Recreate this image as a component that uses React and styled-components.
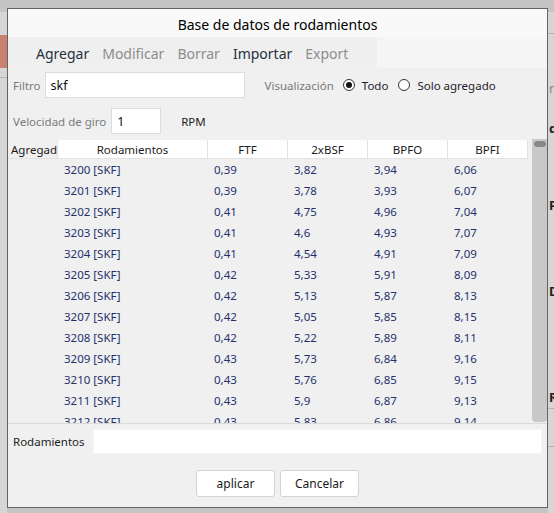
import React from "react";
import styled, { createGlobalStyle } from "styled-components";

const Global = createGlobalStyle`
  html, body { margin: 0; padding: 0; }
  body {
    width: 554px; height: 513px; overflow: hidden;
    background: #c5c5c5;
    font-family: "Noto Sans", "Open Sans", sans-serif;
  }
  * { box-sizing: border-box; }
`;

const Desktop = styled.div`
  position: relative;
  width: 554px;
  height: 513px;
  overflow: hidden;
`;

const BackStrip = styled.div`
  position: absolute;
  top: 12px;
  bottom: 0;
  left: ${(p) => p.$left}px;
  width: ${(p) => p.$width}px;
  background: #d6d6d6;
  overflow: hidden;
`;

const BackBlock = styled.div`
  position: absolute;
  left: 0;
  top: ${(p) => p.$top}px;
  width: 100%;
  height: ${(p) => p.$h}px;
  background: ${(p) => p.$color};
`;

const BackGlyph = styled.span`
  position: absolute;
  left: 1px;
  top: ${(p) => p.$top}px;
  font-size: 13px;
  line-height: 16px;
  font-weight: ${(p) => (p.$bold ? 700 : 400)};
  color: ${(p) => (p.$bold ? "#222" : "#888")};
  white-space: nowrap;
`;

const Window = styled.div`
  position: absolute;
  left: 7px;
  top: 8px;
  width: 541px;
  height: 500px;
  border: 1px solid #646464;
  background: #f0f0f0;
  display: flex;
  flex-direction: column;
`;

const TitleBar = styled.div`
  height: 28px;
  background: #f9f9f9;
  display: flex;
  align-items: center;
  justify-content: center;
  font-size: 14px;
  color: #000;
  padding-top: 2px;
`;

const MenuRow = styled.div`
  height: 31px;
  background: #f5f5f5;
  display: flex;
`;

const MenuGroup = styled.div`
  width: 369px;
  background: #efefef;
  display: flex;
  align-items: center;
  gap: 13px;
  padding-left: 28px;
  padding-top: 1px;
`;

const MenuItem = styled.span`
  font-size: 14px;
  color: ${(p) => (p.$disabled ? "#8d8d8d" : "#26313d")};
`;

const FormRow = styled.div`
  display: flex;
  align-items: center;
  height: 26px;
  margin-top: ${(p) => p.$mt}px;
  padding-left: 5px;
`;

const Label = styled.span`
  font-size: 11.5px;
  color: ${(p) => (p.$dark ? "#1e1e1e" : "#7a7a7a")};
  margin-right: ${(p) => p.$mr || 0}px;
  margin-left: ${(p) => p.$ml || 0}px;
  white-space: nowrap;
`;

const Input = styled.div`
  width: ${(p) => p.$w}px;
  height: ${(p) => p.$h || 26}px;
  background: #fff;
  border: 1px solid ${(p) => (p.$flat ? "#f5f5f5" : "#dcdcdc")};
  font-size: 12.5px;
  color: #111;
  display: flex;
  align-items: center;
  padding-left: 5px;
  flex: ${(p) => (p.$grow ? 1 : "none")};
`;

const RadioGroup = styled.div`
  display: flex;
  align-items: center;
`;

const Radio = styled.span`
  width: 12px;
  height: 12px;
  border-radius: 50%;
  border: 1px solid #333;
  background: #fff;
  display: inline-flex;
  align-items: center;
  justify-content: center;
  margin-right: 7px;
  margin-left: ${(p) => p.$ml || 0}px;
  &::after {
    content: "";
    width: 6px;
    height: 6px;
    border-radius: 50%;
    background: ${(p) => (p.$checked ? "#111" : "transparent")};
  }
`;

const RadioText = styled.span`
  font-size: 11.5px;
  color: #2a1b2e;
`;

const TableWrap = styled.div`
  margin-top: 6px;
  height: 284px;
  display: flex;
  border-bottom: 1px solid #dadada;
`;

const Table = styled.div`
  flex: 1;
  overflow: hidden;
`;

const HeaderRow = styled.div`
  display: grid;
  grid-template-columns: 50px 150px 80px 80px 80px 80px;
  height: 19px;
`;

const HeaderCell = styled.div`
  background: ${(p) => (p.$first ? "#f0f0f0" : "#fff")};
  border-right: 1px solid #e2e2e2;
  border-bottom: 1px solid #e2e2e2;
  font-size: 11.5px;
  color: #1a1a1a;
  display: flex;
  align-items: center;
  justify-content: ${(p) => (p.$first ? "flex-start" : "center")};
  padding-left: ${(p) => (p.$first ? 3 : 0)}px;
  overflow: hidden;
  white-space: nowrap;
`;

const Row = styled.div`
  display: grid;
  grid-template-columns: 50px 150px 80px 80px 80px 80px;
  height: 21px;
`;

const Cell = styled.div`
  font-size: 11.5px;
  color: #24306e;
  display: flex;
  align-items: center;
  padding-left: 6px;
  white-space: nowrap;
`;

const Scrollbar = styled.div`
  width: 15px;
  margin-top: -1px;
  margin-bottom: 1px;
  background: #c8c8c8;
  border-radius: 0 0 4px 4px;
  display: flex;
  justify-content: center;
  padding-top: 2px;
`;

const Thumb = styled.div`
  width: 12px;
  height: 6px;
  border-radius: 3px;
  background: #888;
`;

const BottomRow = styled.div`
  display: flex;
  align-items: center;
  margin-top: 5px;
  padding: 0 5px;
  height: 25px;
`;

const ButtonRow = styled.div`
  display: flex;
  justify-content: center;
  gap: 5px;
  margin-top: 16px;
`;

const Button = styled.button`
  width: 79px;
  height: 27px;
  background: #fff;
  border: 1px solid #d3d3d3;
  border-radius: 3px;
  font-family: inherit;
  font-size: 12px;
  color: #1a1a1a;
  padding: 0;
`;

const data = [
  ["3200 [SKF]", "0,39", "3,82", "3,94", "6,06"],
  ["3201 [SKF]", "0,39", "3,78", "3,93", "6,07"],
  ["3202 [SKF]", "0,41", "4,75", "4,96", "7,04"],
  ["3203 [SKF]", "0,41", "4,6", "4,93", "7,07"],
  ["3204 [SKF]", "0,41", "4,54", "4,91", "7,09"],
  ["3205 [SKF]", "0,42", "5,33", "5,91", "8,09"],
  ["3206 [SKF]", "0,42", "5,13", "5,87", "8,13"],
  ["3207 [SKF]", "0,42", "5,05", "5,85", "8,15"],
  ["3208 [SKF]", "0,42", "5,22", "5,89", "8,11"],
  ["3209 [SKF]", "0,43", "5,73", "6,84", "9,16"],
  ["3210 [SKF]", "0,43", "5,76", "6,85", "9,15"],
  ["3211 [SKF]", "0,43", "5,9", "6,87", "9,13"],
  ["3212 [SKF]", "0,43", "5,83", "6,86", "9,14"],
];

const headers = ["Agregado", "Rodamientos", "FTF", "2xBSF", "BPFO", "BPFI"];

export default function App() {
  return (
    <>
      <Global />
      <Desktop>
        <BackStrip $left={0} $width={7}>
          <BackBlock $top={23} $h={33} $color="#c8826f" />
          <BackBlock $top={65} $h={1} $color="#b4b4b4" />
        </BackStrip>
        <BackStrip $left={548} $width={6}>
          <BackBlock $top={21} $h={1} $color="#b4b4b4" />
          <BackGlyph $top={68}>re</BackGlyph>
          <BackGlyph $top={108} $bold>d</BackGlyph>
          <BackGlyph $top={185} $bold>P</BackGlyph>
          <BackGlyph $top={271} $bold>D</BackGlyph>
          <BackGlyph $top={377} $bold>Ro</BackGlyph>
          <BackBlock $top={396} $h={1} $color="#b4b4b4" />
          <BackBlock $top={434} $h={1} $color="#b4b4b4" />
        </BackStrip>
        <Window>
          <TitleBar>Base de datos de rodamientos</TitleBar>
          <MenuRow>
            <MenuGroup>
              <MenuItem>Agregar</MenuItem>
              <MenuItem $disabled>Modificar</MenuItem>
              <MenuItem $disabled>Borrar</MenuItem>
              <MenuItem>Importar</MenuItem>
              <MenuItem $disabled>Export</MenuItem>
            </MenuGroup>
          </MenuRow>
          <FormRow $mt={4}>
            <Label $mr={4}>Filtro</Label>
            <Input $w={200}>skf</Input>
            <Label $ml={20} $mr={9}>Visualización</Label>
            <RadioGroup>
              <Radio $checked />
              <RadioText>Todo</RadioText>
              <Radio $ml={10} />
              <RadioText>Solo agregado</RadioText>
            </RadioGroup>
          </FormRow>
          <FormRow $mt={10}>
            <Label $mr={5}>Velocidad de giro</Label>
            <Input $w={50}>1</Input>
            <Label $dark $ml={20}>RPM</Label>
          </FormRow>
          <TableWrap>
            <Table>
              <HeaderRow>
                {headers.map((h, i) => (
                  <HeaderCell key={h} $first={i === 0}>
                    {h}
                  </HeaderCell>
                ))}
              </HeaderRow>
              {data.map((r) => (
                <Row key={r[0]}>
                  <Cell />
                  {r.map((v, i) => (
                    <Cell key={i}>{v}</Cell>
                  ))}
                </Row>
              ))}
            </Table>
            <Scrollbar>
              <Thumb />
            </Scrollbar>
          </TableWrap>
          <BottomRow>
            <Label $dark $mr={8}>Rodamientos</Label>
            <Input $grow $flat $h={25} />
          </BottomRow>
          <ButtonRow>
            <Button>aplicar</Button>
            <Button>Cancelar</Button>
          </ButtonRow>
        </Window>
      </Desktop>
    </>
  );
}
